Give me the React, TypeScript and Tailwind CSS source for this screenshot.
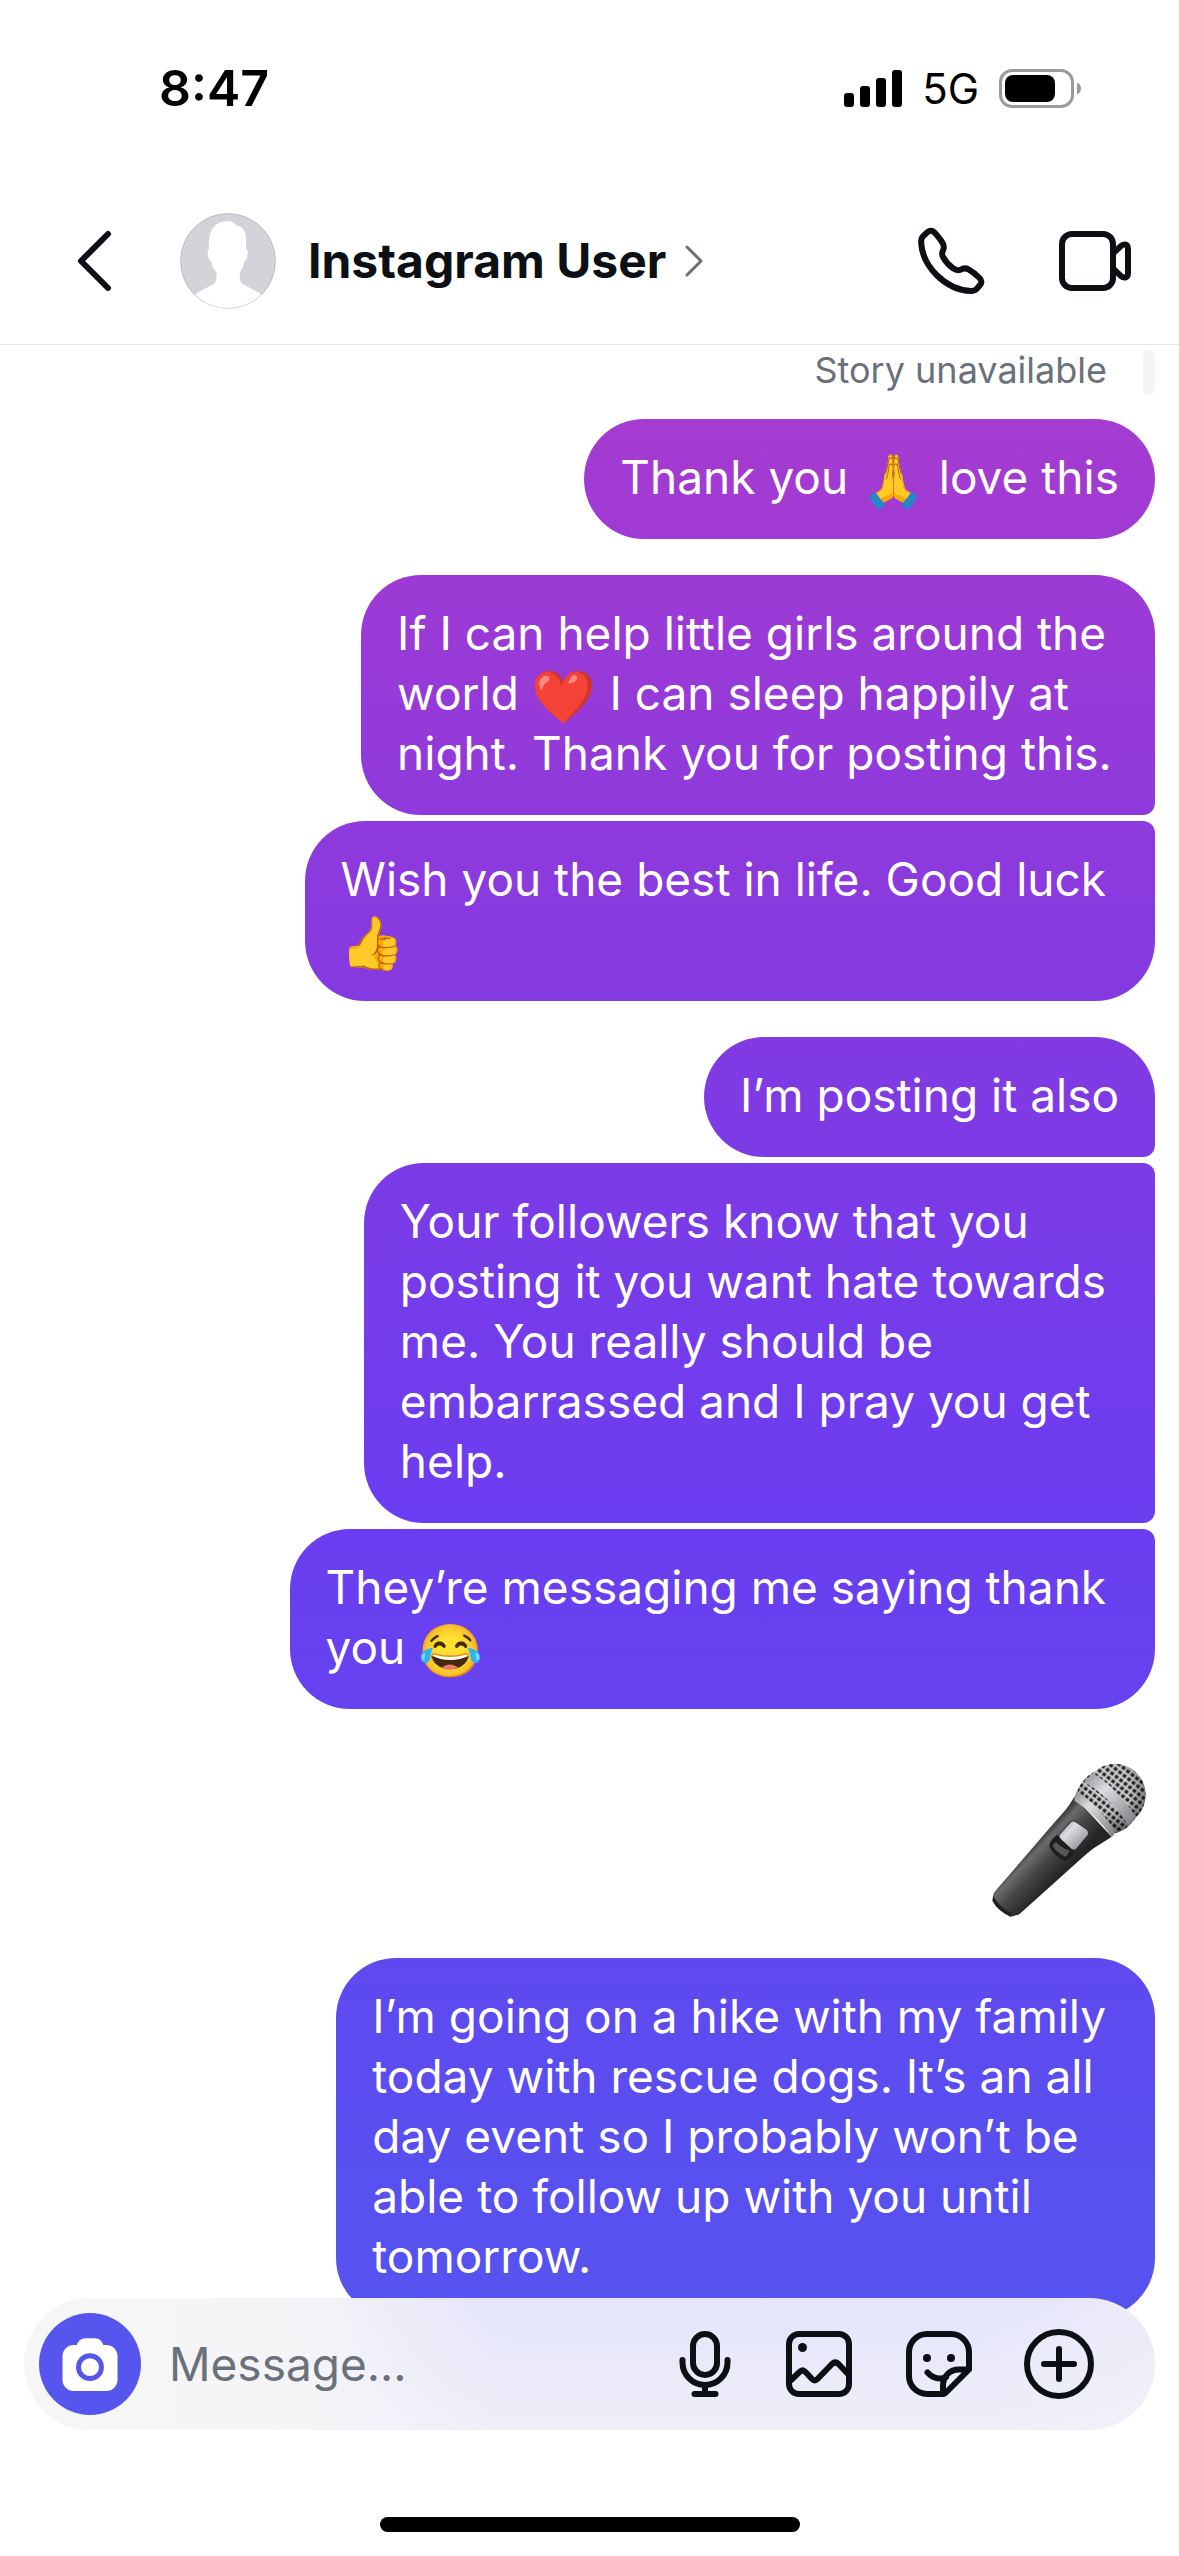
import React from 'react';

interface Message {
  id: number;
  text: string;
  shape: 'single' | 'first' | 'middle' | 'last';
  kind?: 'emoji';
}

// Line breaks keep their trailing space, it counts towards the bubble width
const messages: Message[] = [
  { id: 1, text: 'Thank you 🙏 love this', shape: 'single' },
  {
    id: 2,
    text: 'If I can help little girls around the \nworld ❤️ I can sleep happily at \nnight. Thank you for posting this.',
    shape: 'first'
  },
  { id: 3, text: 'Wish you the best in life. Good luck \n👍', shape: 'last' },
  { id: 4, text: 'I’m posting it also', shape: 'first' },
  {
    id: 5,
    text: 'Your followers know that you \nposting it you want hate towards \nme. You really should be \nembarrassed and I pray you get \nhelp.',
    shape: 'middle'
  },
  { id: 6, text: 'They’re messaging me saying thank \nyou 😂', shape: 'last' },
  { id: 7, text: '🎤', shape: 'single', kind: 'emoji' },
  {
    id: 8,
    text: 'I’m going on a hike with my family \ntoday with rescue dogs. It’s an all \nday event so I probably won’t be \nable to follow up with you until \ntomorrow.',
    shape: 'single'
  }
];

const shapes = {
  single: 'mt-9 rounded-[60px]',
  first: 'mt-9 rounded-[60px] rounded-br-xl',
  middle: 'mt-1.5 rounded-[60px] rounded-r-xl',
  last: 'mt-1.5 rounded-[60px] rounded-tr-xl'
};

const EMOJI = /(\p{Extended_Pictographic}\uFE0F?)/u;

const stroke = {
  fill: 'none',
  stroke: 'currentColor',
  strokeWidth: 6,
  strokeLinecap: 'round' as const,
  strokeLinejoin: 'round' as const
};

const SignalIcon = () => (
  <svg className="w-[58px] h-[37px]" viewBox="0 0 58 37" fill="currentColor" aria-hidden="true">
    <rect x="0" y="23" width="10" height="14" rx="3" />
    <rect x="16" y="16" width="10" height="21" rx="3" />
    <rect x="32" y="8" width="10" height="29" rx="3" />
    <rect x="48" y="0" width="10" height="37" rx="3" />
  </svg>
);

const BatteryIcon = () => (
  <svg className="w-[82px] h-[39px]" viewBox="0 0 82 39" aria-hidden="true">
    <rect x="1.5" y="1.5" width="72" height="36" rx="11.5" fill="none" stroke="#9b9b9b" strokeWidth="3" />
    <rect x="6" y="6" width="50" height="27" rx="8" fill="#000" />
    <path d="M78 13.5c2.4 1 4 3.300 4 6s-1.600 5-4 6z" fill="#9b9b9b" />
  </svg>
);

const Avatar = () => (
  <svg className="w-24 h-24 shrink-0" viewBox="360 69 288 288" aria-hidden="true">
    <circle cx="504" cy="213" r="143" fill="#d3d4da" />
    <path
      d="M447 178C445 130 455 95 503 93C515 93 523 97 529 107C550 108 558 125 558 150V178C564 178 564 185 562 198C561 209 557 213 552 215C550 232 546 240 539 247C540 262 538 275 548 282C565 292 590 302 604 314Q562 356 504 356Q446 356 405 314C420 302 445 292 460 283C471 275 469 262 470 247C460 238 456 228 454 214C448 212 443 200 443 188C443 180 444 178 447 178Z"
      fill="#fff"
    />
    <circle cx="504" cy="213" r="142" fill="none" stroke="#000" strokeOpacity="0.13" strokeWidth="3" />
  </svg>
);

const PhoneIcon = () => (
  <svg className="w-[72px] h-[72px]" viewBox="0 0 72 72" {...stroke} aria-hidden="true">
    <path d="M19.5 7.500C17.500 5.200 14.800 5 12.600 7L8 11.300C6.300 13 6 15 6.200 18C7.500 41 30 65 56 66C58.500 66 60.200 65.500 61.800 63.800L65 60C67 57.800 66.600 55 64.500 53C61 49.500 57.500 46.500 53.500 44.300C50.500 42.700 48 43.200 45.500 44.700C42.500 46 40.500 45 38 43.300C34 40.500 30.500 36.500 28 32C26.500 29 26.800 27.500 28.200 25C29.400 22.500 29 20.500 27.500 17.800C25.300 14 22.500 10.800 19.500 7.500Z" />
  </svg>
);

const VideoIcon = () => (
  <svg className="w-[78px] h-[72px]" viewBox="0 0 78 72" {...stroke} aria-hidden="true">
    <rect x="6" y="9" width="51" height="54" rx="10" />
    <path d="M58 27.500L64.500 21.300Q67 18.800 69.800 19.600Q72 20.500 72 24V48Q72 51.500 69.800 52.400Q67 53.200 64.500 50.700L58 44.500" />
  </svg>
);

const CameraIcon = () => (
  <svg className="w-14 h-[53px]" viewBox="186 192 168 160" aria-hidden="true">
    <rect x="187" y="213" width="166" height="139" rx="34" fill="#fff" />
    <path d="M228 218Q236 193 256 193H286Q304 193 312 218Z" fill="#fff" />
    <circle cx="270" cy="280" r="34.5" fill="none" stroke="#5655ee" strokeWidth="15" />
  </svg>
);

const MicIcon = () => (
  <svg className="w-[60px] h-[72px]" viewBox="6 0 60 72" {...stroke} aria-hidden="true">
    <rect x="24" y="6" width="24" height="41" rx="12" />
    <path d="M13.500 32v2.500a22.500 22.500 0 0 0 45 0V32M36 57v9M25.500 66h21" />
  </svg>
);

const ImageIcon = () => (
  <svg className="w-[72px] h-[72px]" viewBox="0 0 72 72" {...stroke} aria-hidden="true">
    <rect x="6" y="6" width="60" height="60" rx="10" />
    <circle cx="19.500" cy="19.500" r="4.500" fill="currentColor" stroke="none" />
    <path d="M6 54L16.500 44Q19.500 41 22.500 44L29 51Q31.700 54 34.500 51L49 36Q52.300 33 55.500 36L66 47" />
  </svg>
);

const StickerIcon = () => (
  <svg className="w-[72px] h-[72px]" viewBox="0 0 72 72" {...stroke} aria-hidden="true">
    <path d="M40 66H24A18 18 0 0 1 6 48V24A18 18 0 0 1 24 6H48A18 18 0 0 1 66 24V41.500L42.500 65Q41.500 66 40 66V58C40 48 47 41.500 56 41.500H65.500" />
    <path d="M24.500 44.500Q30 50.500 37 50.500Q40.500 50.500 43 49" />
    <circle cx="24" cy="30" r="4" fill="currentColor" stroke="none" />
    <circle cx="48" cy="30" r="4" fill="currentColor" stroke="none" />
  </svg>
);

const PlusIcon = () => (
  <svg className="w-[72px] h-[72px]" viewBox="0 0 72 72" {...stroke} aria-hidden="true">
    <circle cx="36" cy="36" r="32" />
    <path d="M36 21v30M21 36h30" />
  </svg>
);

const Microphone = () => (
  <svg className="w-[165px] h-[177px] mt-9" viewBox="150 75 495 531" role="img" aria-label="🎤">
    <defs>
      <pattern id="mesh" width="17" height="17" patternUnits="userSpaceOnUse" patternTransform="rotate(38)">
        <rect width="17" height="17" fill="#262827" />
        <path d="M0 4H17M4 0V17" stroke="#d0d1d1" strokeWidth="6" />
      </pattern>
      <radialGradient id="shade" cx="0.45" cy="0.35" r="0.65">
        <stop offset="0.5" stopColor="#000" stopOpacity="0" />
        <stop offset="1" stopColor="#000" stopOpacity="0.5" />
      </radialGradient>
      <linearGradient id="body" gradientUnits="userSpaceOnUse" x1="260" y1="390" x2="350" y2="475">
        <stop offset="0" stopColor="#343635" />
        <stop offset="0.2" stopColor="#6a6c6b" />
        <stop offset="0.5" stopColor="#474948" />
        <stop offset="1" stopColor="#242625" />
      </linearGradient>
      <linearGradient id="steel" x1="0" y1="0" x2="1" y2="1">
        <stop offset="0" stopColor="#8b8d90" />
        <stop offset="0.35" stopColor="#dcdde2" />
        <stop offset="0.7" stopColor="#a6a8ac" />
        <stop offset="1" stopColor="#77797d" />
      </linearGradient>
    </defs>
    <path d="M403 230C385 262 368 280 345 305L166 513Q158 522 158 538Q176 572 212 590L236 584Q242 580 248 574L430 410C458 384 485 370 515 350Z" fill="url(#body)" />
    <path d="M160 528Q180 565 216 580L212 590Q172 572 157 542Z" fill="#1f2120" />
    <path d="M412 213C420 190 440 168 460 157A93 93 0 0 1 588 292C570 318 550 335 523 340Z" fill="url(#mesh)" />
    <path d="M412 213C420 190 440 168 460 157A93 93 0 0 1 588 292C570 318 550 335 523 340Z" fill="url(#shade)" />
    <path d="M432 186Q444 168 462 161Q530 205 587 288Q580 306 566 317Q508 228 432 186Z" fill="url(#steel)" />
    <path d="M404 228L411 212Q475 258 528 335L516 351Q465 280 403 242Z" fill="url(#steel)" />
    <path d="M351 347Q332 362 330 378Q342 406 376 421Q390 412 404 393Z" fill="#1d1f1e" stroke="#191b1a" strokeWidth="4" />
    <path d="M348 365Q365 385 390 392L378 410Q352 400 337 377Z" fill="#555756" />
    <path d="M391 307Q397 300 405 304L440 328Q449 336 445 344L410 386Q404 393 396 389L362 358Q353 350 359 343Z" fill="url(#steel)" stroke="#2b2d2c" strokeWidth="3" />
  </svg>
);

const Bubble: React.FC<{ message: Message }> = ({ message }) => {
  if (message.kind === 'emoji') {
    return <Microphone />;
  }

  return (
    <p
      className={`${shapes[message.shape]} px-9 pt-7 pb-8 text-[46px] leading-[60px] text-white whitespace-pre bg-fixed bg-[linear-gradient(to_bottom,#a93ccf_14%,#9c3ad5_23%,#843ae1_39%,#6b3df0_59%,#5553ef_90%)]`}
    >
      {message.text.split(EMOJI).map((part, i) =>
        EMOJI.test(part) ? (
          <span key={i} className="inline-block text-[52px] leading-[52px] align-bottom">
            {part}
          </span>
        ) : (
          part
        )
      )}
    </p>
  );
};

export default function App() {
  return (
    <div className="flex flex-col min-h-screen bg-white text-[#0c1014] font-[Inter,'Noto_Color_Emoji',sans-serif]">
      <div className="flex items-center justify-between h-[177px] pl-[159px] pr-[98px] text-black">
        <span className="text-[50px] font-semibold">8:47</span>
        <div className="flex items-center gap-5">
          <SignalIcon />
          <span className="text-[42px] leading-10">5G</span>
          <BatteryIcon />
        </div>
      </div>

      <header className="flex items-center justify-between h-[168px] pl-[72px] pr-[45px] border-b border-[#e6e9ec]">
        <div className="flex items-center">
          <button className="mr-[60px]" aria-label="Back">
            <svg className="w-12 h-[72px]" viewBox="0 0 48 72" {...stroke} aria-hidden="true">
              <path d="M36 9L9 36L36 63" />
            </svg>
          </button>
          <a href="#profile" className="flex items-center">
            <Avatar />
            <h1 className="ml-8 text-[48px] font-bold leading-[60px]">Instagram User</h1>
            <svg className="w-5 h-8 ml-[18px] text-[#6a717a]" viewBox="0 0 20 32" {...stroke} strokeWidth={3} aria-hidden="true">
              <path d="M3 2L17 16L3 30" />
            </svg>
          </a>
        </div>
        <div className="flex items-center gap-[69px]">
          <button aria-label="Audio call">
            <PhoneIcon />
          </button>
          <button aria-label="Video call">
            <VideoIcon />
          </button>
        </div>
      </header>

      <main className="flex flex-col items-end px-6 pt-[5px]">
        <div className="flex items-start gap-9 -mb-3">
          <span className="text-4xl leading-10 text-[#6a717a]">Story unavailable</span>
          <span className="w-3 h-[45px] rounded-md bg-[#f3f4f6]" />
        </div>
        {messages.map((message) => (
          <Bubble key={message.id} message={message} />
        ))}
      </main>

      <form
        className="relative flex items-center h-[132px] mx-6 -mt-5 pl-[15px] pr-[60px] rounded-full bg-[linear-gradient(to_bottom,transparent,#f6f6f899),linear-gradient(to_right,#f6f6f6_12%,#f3f3f7_26%,#e4e4fb_42%,#e4e4fb_85%,#ebebf9)]"
        onSubmit={(e) => e.preventDefault()}
      >
        <button type="button" aria-label="Camera" className="flex items-center justify-center w-[102px] h-[102px] shrink-0 rounded-full bg-[#5655ee]">
          <CameraIcon />
        </button>
        <input
          type="text"
          aria-label="Message"
          placeholder="Message..."
          className="flex-1 min-w-0 ml-7 text-[46px] leading-[60px] outline-none placeholder:text-[#6a717a]"
        />
        <div className="flex items-center gap-12">
          <button type="button" aria-label="Voice message">
            <MicIcon />
          </button>
          <button type="button" aria-label="Photo library">
            <ImageIcon />
          </button>
          <button type="button" aria-label="Stickers">
            <StickerIcon />
          </button>
          <button type="button" aria-label="More">
            <PlusIcon />
          </button>
        </div>
      </form>

      <div className="w-[420px] h-[15px] mt-[87px] mb-6 mx-auto rounded-full bg-black" />
    </div>
  );
}
